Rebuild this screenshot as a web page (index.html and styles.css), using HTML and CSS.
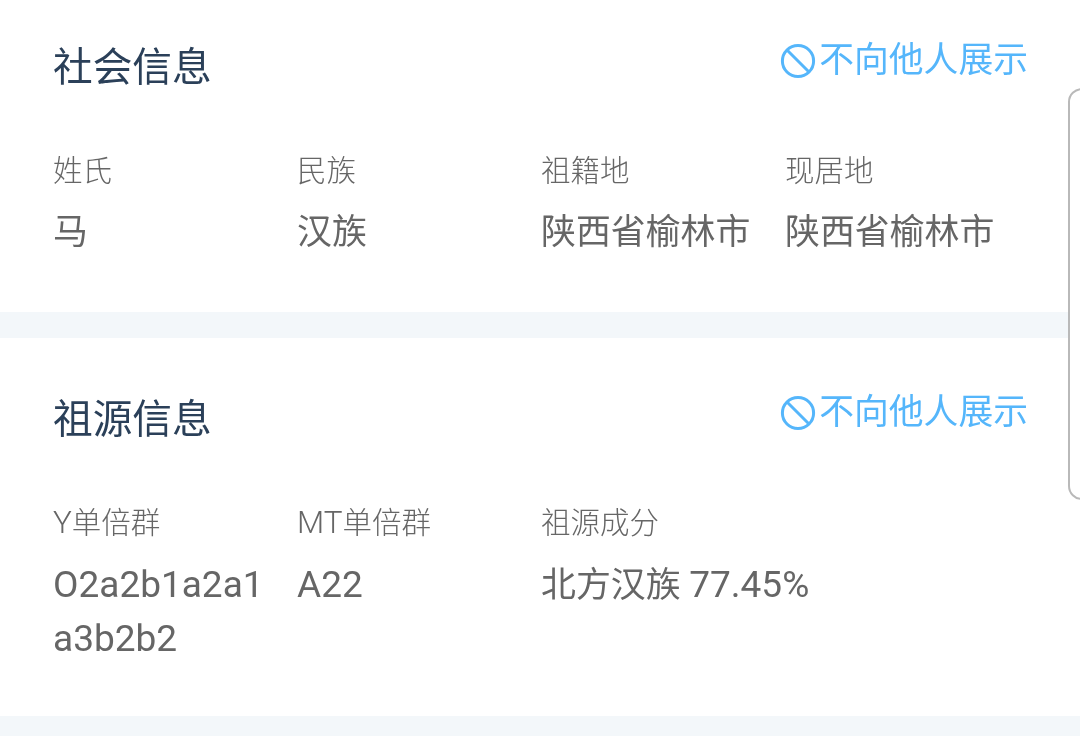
FILE: index.html
```html
<!DOCTYPE html>
<html>
<head>
    <title>社会信息</title>
    <meta name="viewport" content="width=device-width, initial-scale=1">
    <link rel="stylesheet" href="styles.css">
</head>
<body>
    <div class="section first">
        <div class="head">
            <h2>社会信息</h2>
            <div class="private">
                <svg class="icon" viewBox="0 0 36 36"><circle cx="18" cy="18" r="15.6"/><path d="M7 7L29 29"/></svg>
                <span>不向他人展示</span>
            </div>
        </div>
        <div class="info">
            <div class="item"><div class="label">姓氏</div><div class="value">马</div></div>
            <div class="item"><div class="label">民族</div><div class="value">汉族</div></div>
            <div class="item"><div class="label">祖籍地</div><div class="value">陕西省榆林市</div></div>
            <div class="item"><div class="label">现居地</div><div class="value">陕西省榆林市</div></div>
        </div>
    </div>

    <div class="section second">
        <div class="head">
            <h2>祖源信息</h2>
            <div class="private">
                <svg class="icon" viewBox="0 0 36 36"><circle cx="18" cy="18" r="15.6"/><path d="M7 7L29 29"/></svg>
                <span>不向他人展示</span>
            </div>
        </div>
        <div class="info">
            <div class="item"><div class="label"><span class="en">Y</span>单倍群</div><div class="value"><span class="en">O2a2b1a2a1<br>a3b2b2</span></div></div>
            <div class="item"><div class="label"><span class="en">MT</span>单倍群</div><div class="value"><span class="en">A22</span></div></div>
            <div class="item wide"><div class="label">祖源成分</div><div class="value">北方汉族 <span class="en">77.45%</span></div></div>
        </div>
    </div>

    <div class="handle"></div>
</body>
</html>
```

FILE: styles.css
```css
html, body {
    margin: 0;
    padding: 0;
}

body {
    position: relative;
    height: 736px;
    overflow: hidden;
    background-color: #f3f7fa;
    font-family: Roboto, "Noto Sans CJK SC", sans-serif;
}

.section {
    box-sizing: border-box;
    padding: 0 52px 0 53px;
    background-color: #fff;
}

.first {
    height: 312px;
    padding-top: 38px;
}

.second {
    height: 378px;
    margin-top: 26px;
    padding-top: 52px;
}

.head {
    display: flex;
    justify-content: space-between;
    align-items: flex-start;
    height: 58px;
    will-change: opacity;
}

h2 {
    margin: 2px 0 0;
    font-size: 39.7px;
    line-height: 56px;
    font-weight: 400;
    color: #2b4059;
}

.private {
    display: flex;
    align-items: center;
    height: 44px;
    font-size: 34.8px;
    line-height: 44px;
    color: #55b6fb;
}

.icon {
    width: 36px;
    height: 36px;
    margin-right: 3px;
    margin-top: 1px;
    margin-left: -1px;
    fill: none;
    stroke: #55b6fb;
    stroke-width: 3;
}

.info {
    display: grid;
    grid-template-columns: repeat(4, 244px);
    margin-top: 55px;
    will-change: opacity;
}

.item.wide {
    grid-column: span 2;
}

.label {
    font-size: 29.5px;
    line-height: 40px;
    font-weight: 300;
    color: #666;
}

.label .en {
    font-size: 31.4px;
}

.value {
    margin-top: 15px;
    font-size: 34.9px;
    line-height: 53px;
    color: #666;
    width: 215px;
}

.value .en {
    font-size: 37px;
}

.wide .value {
    width: auto;
}

.handle {
    position: absolute;
    top: 88px;
    left: 1068px;
    width: 40px;
    height: 412px;
    box-sizing: border-box;
    border: 2px solid #b9b9b9;
    border-radius: 14px;
    background-color: #fff;
}
```
